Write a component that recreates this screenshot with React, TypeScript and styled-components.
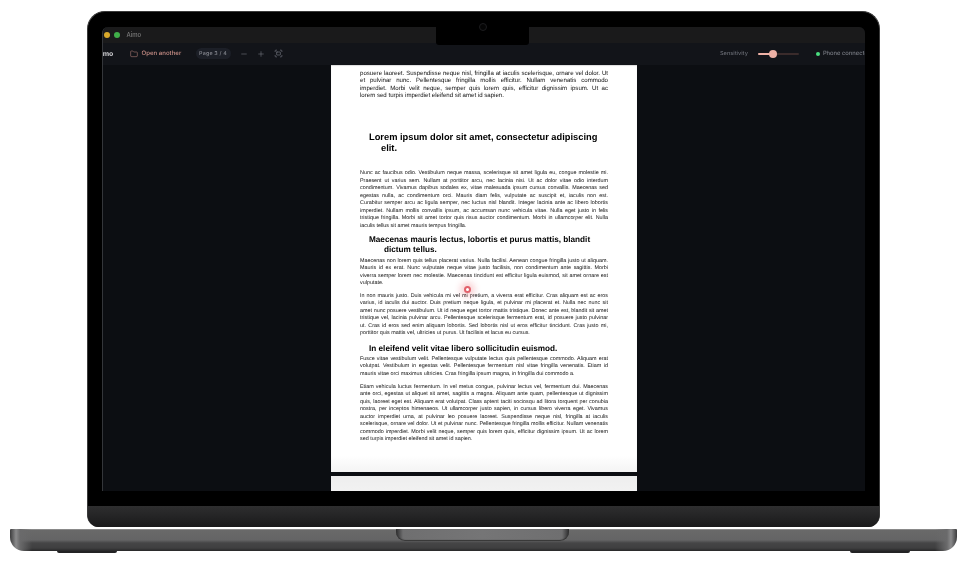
import React from "react";
import styled, { createGlobalStyle } from "styled-components";
import { Folder, Minus, Plus, Fullscreen } from "lucide-react";

const Global = createGlobalStyle`
  html, body { margin: 0; padding: 0; background: #fff; }
  body { font-family: "Inter", "Liberation Sans", sans-serif; }
  * { box-sizing: border-box; }
`;

const Stage = styled.div`
  width: 967px; height: 565px; overflow: hidden; background: #fff;
  display: flex; flex-direction: column; padding-top: 11px;
`;
const Lid = styled.div`
  position: relative; width: 793px; height: 516px; margin-left: 87px;
  background: #000; border-radius: 18px 18px 12px 12px;
  border-style: solid; border-color: #3a3a3a; border-width: 1.5px 1.5px 0;
  padding: 14.5px 14.5px 0 13.5px; display: flex; flex-direction: column;
`;
const Screen = styled.div`
  height: 464px; background: #0c0e12; border-radius: 6px 6px 0 0; overflow: hidden;
  display: flex; flex-direction: column; border-left: 1px solid #34363a; flex: none;
`;
const Notch = styled.div`
  position: absolute; top: 14px; left: 347.5px; width: 93px; height: 19px;
  background: #000; border-radius: 0 0 3px 3px;
`;
const Camera = styled.div`
  position: absolute; top: 11px; left: 391px; width: 8px; height: 8px; border-radius: 50%;
  border: 1px solid #1c1c1e; background: #050505;
`;
const Chin = styled.div`
  margin: 15px -14.5px 0 -13.5px; height: 21px; flex: none; border-radius: 0 0 11px 11px;
  background: linear-gradient(#2e2e2f, #252526 45%, #19191a);
`;
const TitleBar = styled.div`
  height: 16px; background: #1a1a1b; flex: none; display: flex; align-items: center;
  margin-left: -9px; gap: 4px;
`;
const Light = styled.span<{ $c: string }>`
  width: 6px; height: 6px; border-radius: 50%; background: ${(p) => p.$c}; flex: none;
`;
const AppName = styled.span`
  font-size: 6px; color: #7c7c7c; margin-left: 3px; font-weight: 500; filter: blur(0.25px);
`;
const Toolbar = styled.div`
  height: 22px; background: #121419; flex: none; display: flex; align-items: center;
  justify-content: space-between; margin: 0 -7px 0 -7px; color: #8b8f98;
`;
const ToolGroup = styled.div`
  display: flex; align-items: center; flex: none; filter: blur(0.25px);
  text-rendering: geometricPrecision;
`;
const Brand = styled.span`
  font-size: 7px; font-weight: 700; color: #cfcfd2; width: 34px;
`;
const OpenButton = styled.span`
  display: flex; align-items: center; gap: 4px; color: #c98f87; font-size: 6.1px; font-weight: 500;
  width: 66px;
  svg { flex: none; }
`;
const PagePill = styled.span`
  width: 35px; height: 11px; border-radius: 6px; background: #1c1f27; color: #7e8088;
  font-size: 5.3px; font-weight: 600; letter-spacing: 0.2px; display: flex; align-items: center; justify-content: center;
`;
const IconButton = styled.span`
  display: flex; margin-left: 9px; color: #7c808a;
`;
const Label = styled.span`
  font-size: 5.6px; color: #686b73; font-weight: 500;
`;
const Track = styled.div`
  position: relative; width: 41px; height: 2px; border-radius: 1px; background: #3a2b2b; margin: 0 17px 0 10px;
`;
const TrackFill = styled.div`
  height: 100%; border-radius: 1px; background: #eeb1a6;
`;
const Thumb = styled.div`
  position: absolute; top: -3px; width: 8px; height: 8px; border-radius: 50%; background: #eeb1a6;
`;
const StatusDot = styled.span`
  width: 4px; height: 4px; border-radius: 50%; background: #4ade80; margin-right: 3px;
`;
const Status = styled.span`
  font-size: 5.8px; color: #7a7d85; font-weight: 500; white-space: nowrap;
`;
const Viewer = styled.div`
  flex: 1; min-height: 0; overflow: hidden; display: flex; flex-direction: column; align-items: center;
  padding-left: 1px; gap: 4px; position: relative;
`;
const Sheet = styled.div`
  position: relative; width: 306px; height: 407px; flex: none; color: #000; padding: 5px 29px 0;
  background: linear-gradient(#fff 96%, #f4f4f4);
  font-family: "Liberation Sans", Arial, sans-serif;
  box-shadow: inset 0 1px 1px #ddd;
`;
const Doc = styled.div`
  filter: blur(0.3px); text-rendering: geometricPrecision;
`;
const NextSheet = styled.div`
  width: 306px; height: 30px; flex: none; background: linear-gradient(#eeeeee, #f5f5f5);
`;
const Para = styled.div<{ $after?: number; $size?: number; $lh?: number }>`
  font-size: ${(p) => p.$size ?? 5.4}px; line-height: ${(p) => p.$lh ?? 7.5}px;
  margin-bottom: ${(p) => p.$after ?? 0}px; color: #111;
`;
const Line = styled.div<{ $last?: boolean }>`
  text-align: justify; text-align-last: ${(p) => (p.$last ? "left" : "justify")}; white-space: normal;
`;
const Heading = styled.div<{ $size: number; $indent: number; $top: number; $after: number; $lh: number }>`
  font-weight: 700; font-size: ${(p) => p.$size}px; line-height: ${(p) => p.$lh}px;
  margin: ${(p) => p.$top}px 0 ${(p) => p.$after}px;
  padding-left: ${(p) => 9 + p.$indent}px; text-indent: -${(p) => p.$indent}px;
`;
const Cursor = styled.div`
  position: absolute; left: 132.5px; top: 221px; width: 7px; height: 7px; border-radius: 50%;
  background: #fff; border: 2px solid #e2626c; filter: blur(0.3px);
  box-shadow: 0 0 6px 4px rgba(232, 70, 84, 0.24);
`;
const Base = styled.div`
  position: relative; width: 947px; height: 22px; margin: 2px 0 0 10px; flex: none;
  border-radius: 1px 1px 14px 14px; overflow: hidden;
  background:
    linear-gradient(90deg, #3c3c3d, #8a8a8b 6px, #6a6a6b 10px, rgba(100,100,100,0) 22px, rgba(100,100,100,0) calc(100% - 22px), #6a6a6b calc(100% - 10px), #8a8a8b calc(100% - 6px), #3c3c3d),
    linear-gradient(#9a9a9a, #696969 1.5px, #646465 11px, #454546 14px, #3f3f40 19px, #272728);
  display: flex; justify-content: center;
`;
const Trackpad = styled.div`
  width: 173px; height: 12px; margin-left: -3px; border-radius: 0 0 9px 9px;
  background: linear-gradient(90deg, #2c2c2d, #6f6f70 7px, #757576 50%, #6f6f70 calc(100% - 7px), #2c2c2d);
  box-shadow: inset 0 -1px 1px #333;
`;
const Feet = styled.div`
  display: flex; justify-content: space-between; margin: 0 0 0 57px; width: 853px; flex: none;
`;
const Foot = styled.div`
  width: 60px; height: 2px; background: #232324; border-radius: 0 0 5px 5px;
`;

type Block =
  | { kind: "p"; lines: string[]; after?: number; size?: number; lh?: number }
  | { kind: "h"; text: string; size: number; indent: number; top: number; after: number; lh: number };

const blocks: Block[] = [
  { kind: "p", size: 6.1, lh: 7.5, lines: [
    "posuere laoreet. Suspendisse neque nisl, fringilla at iaculis scelerisque, ornare vel dolor. Ut",
    "et pulvinar nunc. Pellentesque fringilla mollis efficitur. Nullam venenatis commodo",
    "imperdiet. Morbi velit neque, semper quis lorem quis, efficitur dignissim ipsum. Ut ac",
    "lorem sed turpis imperdiet eleifend sit amet id sapien.",
  ] },
  { kind: "h", text: "Lorem ipsum dolor sit amet, consectetur adipiscing elit.", size: 9.3, indent: 12, top: 32.4, after: 16, lh: 11.3 },
  { kind: "p", after: 4.7, lines: [
    "Nunc ac faucibus odio. Vestibulum neque massa, scelerisque sit amet ligula eu, congue molestie mi.",
    "Praesent ut varius sem. Nullam at porttitor arcu, nec lacinia nisi. Ut ac dolor vitae odio interdum",
    "condimentum. Vivamus dapibus sodales ex, vitae malesuada ipsum cursus convallis. Maecenas sed",
    "egestas nulla, ac condimentum orci. Mauris diam felis, vulputate ac suscipit et, iaculis non est.",
    "Curabitur semper arcu ac ligula semper, nec luctus nisl blandit. Integer lacinia ante ac libero lobortis",
    "imperdiet. Nullam mollis convallis ipsum, ac accumsan nunc vehicula vitae. Nulla eget justo in felis",
    "tristique fringilla. Morbi sit amet tortor quis risus auctor condimentum. Morbi in ullamcorper elit. Nulla",
    "iaculis tellus sit amet mauris tempus fringilla.",
  ] },
  { kind: "h", text: "Maecenas mauris lectus, lobortis et purus mattis, blandit dictum tellus.", size: 8.2, indent: 15, top: 0, after: 4, lh: 9.4 },
  { kind: "p", after: 5, lines: [
    "Maecenas non lorem quis tellus placerat varius. Nulla facilisi. Aenean congue fringilla justo ut aliquam.",
    "Mauris id ex erat. Nunc vulputate neque vitae justo facilisis, non condimentum ante sagittis. Morbi",
    "viverra semper lorem nec molestie. Maecenas tincidunt est efficitur ligula euismod, sit amet ornare est",
    "vulputate.",
  ] },
  { kind: "p", after: 5.8, lines: [
    "In non mauris justo. Duis vehicula mi vel mi pretium, a viverra erat efficitur. Cras aliquam est ac eros",
    "varius, id iaculis dui auctor. Duis pretium neque ligula, et pulvinar mi placerat et. Nulla nec nunc sit",
    "amet nunc posuere vestibulum. Ut id neque eget tortor mattis tristique. Donec ante est, blandit sit amet",
    "tristique vel, lacinia pulvinar arcu. Pellentesque scelerisque fermentum erat, id posuere justo pulvinar",
    "ut. Cras id eros sed enim aliquam lobortis. Sed lobortis nisl ut eros efficitur tincidunt. Cras justo mi,",
    "porttitor quis mattis vel, ultricies ut purus. Ut facilisis et lacus eu cursus.",
  ] },
  { kind: "h", text: "In eleifend velit vitae libero sollicitudin euismod.", size: 8.2, indent: 0, top: 0, after: 2.6, lh: 9.4 },
  { kind: "p", after: 5.4, lines: [
    "Fusce vitae vestibulum velit. Pellentesque vulputate lectus quis pellentesque commodo. Aliquam erat",
    "volutpat. Vestibulum in egestas velit. Pellentesque fermentum nisl vitae fringilla venenatis. Etiam id",
    "mauris vitae orci maximus ultricies. Cras fringilla ipsum magna, in fringilla dui commodo a.",
  ] },
  { kind: "p", lines: [
    "Etiam vehicula luctus fermentum. In vel metus congue, pulvinar lectus vel, fermentum dui. Maecenas",
    "ante orci, egestas ut aliquet sit amet, sagittis a magna. Aliquam ante quam, pellentesque ut dignissim",
    "quis, laoreet eget est. Aliquam erat volutpat. Class aptent taciti sociosqu ad litora torquent per conubia",
    "nostra, per inceptos himenaeos. Ut ullamcorper justo sapien, in cursus libero viverra eget. Vivamus",
    "auctor imperdiet urna, at pulvinar leo posuere laoreet. Suspendisse neque nisl, fringilla at iaculis",
    "scelerisque, ornare vel dolor. Ut et pulvinar nunc. Pellentesque fringilla mollis efficitur. Nullam venenatis",
    "commodo imperdiet. Morbi velit neque, semper quis lorem quis, efficitur dignissim ipsum. Ut ac lorem",
    "sed turpis imperdiet eleifend sit amet id sapien.",
  ] },
];

export default function App() {
  return (
    <Stage>
      <Global />
      <Lid>
        <Screen>
          <TitleBar>
            <Light $c="#e0524a" />
            <Light $c="#d9a92b" />
            <Light $c="#3fae49" />
            <AppName>Aimo</AppName>
          </TitleBar>
          <Toolbar>
            <ToolGroup>
              <Brand>Aimo</Brand>
              <OpenButton>
                <Folder size={8} strokeWidth={1.5} />
                Open another
              </OpenButton>
              <PagePill>Page 3 / 4</PagePill>
              <IconButton><Minus size={8} strokeWidth={1.6} /></IconButton>
              <IconButton><Plus size={8} strokeWidth={1.6} /></IconButton>
              <IconButton><Fullscreen size={9} strokeWidth={1.6} /></IconButton>
            </ToolGroup>
            <ToolGroup>
              <Label>Sensitivity</Label>
              <Track>
                <TrackFill style={{ width: "37%" }} />
                <Thumb style={{ left: "27%" }} />
              </Track>
              <StatusDot />
              <Status>Phone connected</Status>
            </ToolGroup>
          </Toolbar>
          <Viewer>
            <Sheet>
              <Doc>
                {blocks.map((b, i) =>
                  b.kind === "h" ? (
                    <Heading key={i} $size={b.size} $indent={b.indent} $top={b.top} $after={b.after} $lh={b.lh}>
                      {b.text}
                    </Heading>
                  ) : (
                    <Para key={i} $after={b.after} $size={b.size} $lh={b.lh}>
                      {b.lines.map((l, j) => (
                        <Line key={j} $last={j === b.lines.length - 1}>{l}</Line>
                      ))}
                    </Para>
                  )
                )}
              </Doc>
              <Cursor />
            </Sheet>
            <NextSheet />
          </Viewer>
        </Screen>
        <Chin />
        <Notch />
        <Camera />
      </Lid>
      <Base>
        <Trackpad />
      </Base>
      <Feet>
        <Foot />
        <Foot />
      </Feet>
    </Stage>
  );
}
